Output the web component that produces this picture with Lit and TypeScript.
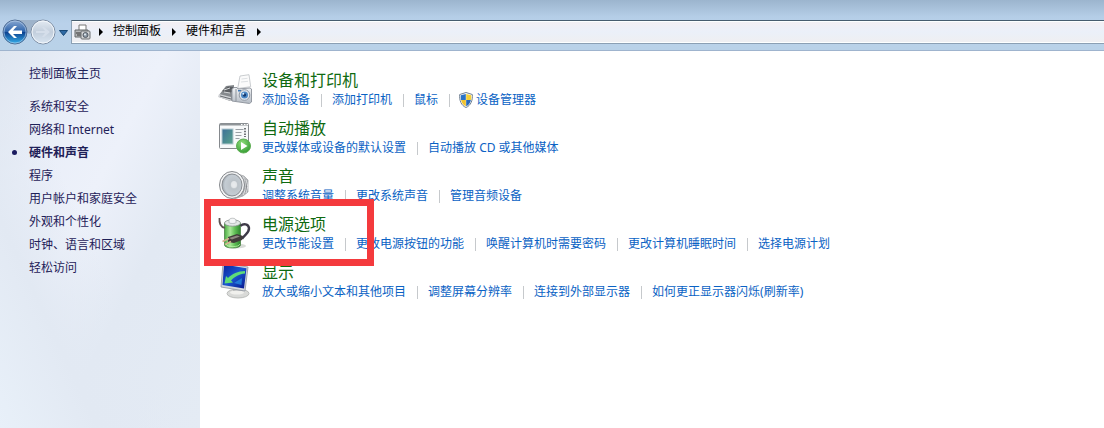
import { LitElement, html, css, svg, nothing } from "lit";
import { customElement, property } from "lit/decorators.js";

interface Task {
  label: string;
  shield?: boolean;
}

interface Category {
  icon: string;
  title: string;
  tasks: Task[];
  marked?: boolean;
}

const categories: Category[] = [
  {
    icon: "devices",
    title: "设备和打印机",
    tasks: [
      { label: "添加设备" },
      { label: "添加打印机" },
      { label: "鼠标" },
      { label: "设备管理器", shield: true },
    ],
  },
  {
    icon: "autoplay",
    title: "自动播放",
    tasks: [{ label: "更改媒体或设备的默认设置" }, { label: "自动播放 CD 或其他媒体" }],
  },
  {
    icon: "sound",
    title: "声音",
    tasks: [{ label: "调整系统音量" }, { label: "更改系统声音" }, { label: "管理音频设备" }],
  },
  {
    icon: "power",
    title: "电源选项",
    marked: true,
    tasks: [
      { label: "更改节能设置" },
      { label: "更改电源按钮的功能" },
      { label: "唤醒计算机时需要密码" },
      { label: "更改计算机睡眠时间" },
      { label: "选择电源计划" },
    ],
  },
  {
    icon: "display",
    title: "显示",
    tasks: [
      { label: "放大或缩小文本和其他项目" },
      { label: "调整屏幕分辨率" },
      { label: "连接到外部显示器" },
      { label: "如何更正显示器闪烁(刷新率)" },
    ],
  },
];

const sections = [
  "系统和安全",
  "网络和 Internet",
  "硬件和声音",
  "程序",
  "用户帐户和家庭安全",
  "外观和个性化",
  "时钟、语言和区域",
  "轻松访问",
];

const icons: Record<string, unknown> = {
  devices: svg`
    <defs>
      <linearGradient id="cam" x1="0" y1="0" x2="0" y2="1">
        <stop offset="0" stop-color="#f1f3f5"/><stop offset="1" stop-color="#b4bbc4"/>
      </linearGradient>
    </defs>
    <path d="M1 21 8 12l8-1v15l-4 1-11-4z" fill="#85898d"/>
    <path d="M4 17 10 12.500l6 .5v4l-5 2z" fill="#5b5e62"/>
    <path d="M6 16l6-2M6 18l6 1" stroke="#d5d7d9" fill="none"/>
    <path d="M1 20l12 3v4L0 23z" fill="#d0d2d5"/>
    <path d="M2 22l11 3" stroke="#666a6f" fill="none"/>
    <path d="M22 2 31 .7l1.700 12-13 1.800z" fill="#fbfbfb" stroke="#bdc0c4" stroke-width=".8"/>
    <path d="M23.500 5l6-.7M23 8l7-.7" stroke="#dde0e3" fill="none"/>
    <path d="M14 15l2-1.500h3l1 1.500 12-1 1.500 1v13l-2 1.500L14 27z" fill="url(#cam)" stroke="#8b919a" stroke-width=".9"/>
    <path d="M18 15v12" stroke="#8d939b" fill="none"/>
    <rect x="20" y="16" width="3" height="1.500" fill="#3e79b8"/>
    <circle cx="26.500" cy="21" r="5.300" fill="#e1e7ee" stroke="#929aa5"/>
    <circle cx="26.500" cy="21" r="3.500" fill="#4a88c6"/>
    <circle cx="26.500" cy="21" r="1.700" fill="#163a70"/>
    <circle cx="25.300" cy="19.700" r="1" fill="#dcf0ff"/>`,
  autoplay: svg`
    <defs>
      <linearGradient id="pic" x1="0" y1="0" x2="1" y2="1">
        <stop offset="0" stop-color="#3d6f98"/><stop offset="1" stop-color="#58a38c"/>
      </linearGradient>
      <radialGradient id="go" cx=".4" cy=".3" r=".8">
        <stop offset="0" stop-color="#8fdc7b"/><stop offset="1" stop-color="#2b962c"/>
      </radialGradient>
    </defs>
    <rect x="1.500" y="1.500" width="29" height="25" rx="1" fill="#f7f9fa" stroke="#85898d"/>
    <path d="M2 2.500h28" stroke="#8f9498" stroke-width="2"/>
    <path d="M23 2.500h1.500M26 2.500h1.500M28.500 2.500H30" stroke="#fff"/>
    <rect x="4" y="7" width="11" height="15" fill="url(#pic)" stroke="#b4c8cf"/>
    <path d="M17.500 7.500h8M17.500 10.500h6M17.500 13.500h6M17.500 16.500h4" stroke="#9ba1a6"/>
    <path d="M27 6v9" stroke="#3a4045" stroke-width="1.400" stroke-dasharray="1.500 1.200"/>
    <circle cx="25.500" cy="24" r="7" fill="url(#go)" stroke="#5fae54"/>
    <path d="M23 20v8l6.500-4z" fill="#fff"/>`,
  sound: svg`
    <defs>
      <radialGradient id="cone" cx=".6" cy=".5" r=".65">
        <stop offset="0" stop-color="#eceef0"/><stop offset=".3" stop-color="#bcc3c9"/>
        <stop offset=".7" stop-color="#c4ccd3"/><stop offset="1" stop-color="#9299a0"/>
      </radialGradient>
      <linearGradient id="magnet" x1="0" y1="0" x2="0" y2="1">
        <stop offset="0" stop-color="#dcdee0"/><stop offset=".5" stop-color="#85888c"/>
        <stop offset="1" stop-color="#c0c2c5"/>
      </linearGradient>
    </defs>
    <path d="M16 3 26 6l4 4v12l-5 4-9 3z" fill="url(#magnet)" stroke="#a6a8ab" stroke-width=".8"/>
    <path d="M25 7c3 6 3 13 0 18M28 10c2 5 2 8 0 13" stroke="#e2e3e5" fill="none"/>
    <ellipse cx="14" cy="15" rx="12.500" ry="13.500" fill="#f0f1f2" stroke="#86898d"/>
    <ellipse cx="14" cy="15" rx="10" ry="11" fill="url(#cone)" stroke="#8b8f94"/>
    <ellipse cx="16" cy="14.500" rx="3" ry="3.500" fill="#e9ebed" opacity=".8"/>`,
  power: svg`
    <defs>
      <linearGradient id="cell" x1="0" y1="0" x2="1" y2="0">
        <stop offset="0" stop-color="#4bab43"/><stop offset=".35" stop-color="#a9e898"/>
        <stop offset=".65" stop-color="#5fbf55"/><stop offset="1" stop-color="#2f8630"/>
      </linearGradient>
    </defs>
    <ellipse cx="18" cy="28" rx="10" ry="2.500" fill="#d9dcd8"/>
    <path d="M6.500 5v22c0 4 16 4 16 0V5z" fill="url(#cell)" stroke="#40783b" stroke-width=".7"/>
    <ellipse cx="14.500" cy="5" rx="8" ry="3.200" fill="#e3e8e6" stroke="#85908a" stroke-width=".8"/>
    <path d="M11 2.500c0-3 7-3 7 0v2c0 1.300-7 1.300-7 0z" fill="#f5f6f7" stroke="#a3a9ab" stroke-width=".7"/>
    <path d="M1.500 0C1 5 3 9 7 10" fill="none" stroke="#5d5452" stroke-width="1.800"/>
    <path d="M22.500 8c3-3 8-2 8.500 2 .4 5-4 6-7 11" fill="none" stroke="#3e3a48" stroke-width="2.400"/>
    <path d="M10 19l9-3 6 2-1 4-8 3-6-1z" fill="#403c3a"/>
    <path d="M11 20l8-2.500 3 1-8 3z" fill="#8e8780"/>
    <path d="M11 20.500 4.500 23.500M13 23.500 7 26.500" stroke="#d5b08e" stroke-width="1.800"/>
    <path d="M8 26c1 3.500 13 3.500 14 0" fill="none" stroke="#baf1a7" stroke-width=".8"/>`,
  display: svg`
    <defs>
      <linearGradient id="screen" x1="0" y1="0" x2="1" y2="1">
        <stop offset="0" stop-color="#0a1f9c"/><stop offset=".5" stop-color="#1a57cf"/>
        <stop offset="1" stop-color="#06128a"/>
      </linearGradient>
    </defs>
    <ellipse cx="20" cy="27.500" rx="11" ry="4.500" fill="#d9dad8" stroke="#b0b2b0" stroke-width=".8"/>
    <path d="M15 21l9 2 1 4-10-1z" fill="#b3b5b5"/>
    <ellipse cx="19" cy="26.500" rx="7" ry="2" fill="#f0f0ed"/>
    <path d="M5-3 30 1 27 25 3 21z" fill="#d6dae0" stroke="#8e949f" stroke-width=".8"/>
    <path d="M6-1.500 28.500 2.300 26 22.500 4.500 19z" fill="url(#screen)"/>
    <path d="M27 5C20 5 14 8 10 12L8 10 6.500 17.500 15 16.500l-2-2c4-4 8-6.500 14-7z" fill="#5fdc78"/>
    <path d="M16 17l8-5-.5 7z" fill="#2ba0f0" opacity=".6"/>`,
};

@customElement("task-icon")
class TaskIcon extends LitElement {
  static styles = css`
    :host { display: block; width: 34px; height: 34px; }
    svg { display: block; width: 34px; height: 34px; overflow: visible; }
  `;
  @property() name = "";
  render() {
    return html`<svg viewBox="0 0 34 34" aria-hidden="true">${icons[this.name]}</svg>`;
  }
}

@customElement("address-bar")
class AddressBar extends LitElement {
  static styles = css`
    :host {
      display: flex;
      align-items: flex-start;
      box-sizing: border-box;
      height: 51px;
      padding-top: 18px;
      padding-left: 2px;
      border-bottom: 1px solid #9fb4ce;
      background: linear-gradient(#9cb5ce 0, #b4cde6 16px, #b9d1ea 24px, #b9d2e8 100%);
    }
    button { padding: 0; border: 0; background: none; display: block; }
    svg { display: block; }
    .recent { padding: 12px 2px 0 1px; margin-right: 1px; }
    .path {
      flex: 1;
      display: flex;
      align-items: center;
      box-sizing: border-box;
      height: 24px;
      margin-top: 2px;
      padding-left: 2px;
      border: 1px solid #8ba0b4;
      border-top-color: #465c6e;
      border-right: 0;
      background: linear-gradient(#f3eff3, #ebf0f9 50%, #efeff1);
      box-shadow: inset 0 1px #fcffff, inset 0 -1px #fcffff;
    }
    .crumb { color: #000; text-decoration: none; font-size: 12px; line-height: 18px; padding-bottom: 2px; }
    .arrow { width: 25px; height: 8px; }
    .first { width: 22px; }
  `;
  arrow(first = false) {
    return first
      ? html`<svg class="first" height="8" viewBox="0 0 22 8" aria-hidden="true">
          <path d="M8 0v8l4-4z" fill="#000" />
        </svg>`
      : html`<svg class="arrow" viewBox="0 0 25 8" aria-hidden="true">
          <path d="M11 0v8l4-4z" fill="#000" />
        </svg>`;
  }
  render() {
    return html`
      <button aria-label="后退">
        <svg width="56" height="28" viewBox="0 0 56 28" aria-hidden="true">
          <defs>
            <linearGradient id="back" x1="0" y1="0" x2="0" y2="1">
              <stop offset="0" stop-color="#8ca9d2" /><stop offset=".48" stop-color="#2e65ac" />
              <stop offset=".5" stop-color="#0c3f8d" /><stop offset="1" stop-color="#36b2ed" />
            </linearGradient>
            <linearGradient id="forward" x1="0" y1="0" x2="0" y2="1">
              <stop offset="0" stop-color="#e4ebf3" /><stop offset=".5" stop-color="#c2cedc" />
              <stop offset="1" stop-color="#dae6f2" />
            </linearGradient>
          </defs>
          <path d="M13 2h28v6l-14 8z" fill="#9eb3ca" />
          <circle cx="13" cy="14" r="12" fill="url(#back)" stroke="#526f96" />
          <circle cx="13" cy="14" r="11" fill="none" stroke="#b9d2ec" stroke-opacity=".6" />
          <path d="M6 14l6-6h3l-4 4.500h9v3.500h-9l4 4h-3z" fill="#fff" />
          <circle cx="41" cy="14" r="12" fill="url(#forward)" stroke="#7f8fa5" />
          <circle cx="41" cy="14" r="11" fill="none" stroke="#f2f7fb" />
          <path d="M48 14l-6-5h-2l3 4h-9v2h9l-3 4h2z" fill="#d5deea" />
        </svg>
      </button>
      <button class="recent" aria-label="最近浏览的位置">
        <svg width="9" height="6" viewBox="0 0 9 6" aria-hidden="true">
          <path d="M.5.5h8L4.500 5.500z" fill="#2e6aa5" stroke="#174775" />
        </svg>
      </button>
      <nav class="path">
        <svg width="17" height="17" viewBox="0 0 17 17" aria-hidden="true">
          <path d="M5 1h7v6H5z" fill="#fff" stroke="#777" />
          <path d="M1 6h13v7H1z" fill="#b4b6b8" stroke="#65686b" />
          <path d="M2 9h5M3 11h4" stroke="#333" />
          <rect x="7" y="7" width="9" height="8" rx="1" fill="#d2d4d6" stroke="#6d7073" />
          <circle cx="11.500" cy="11" r="2.500" fill="#8a97a4" stroke="#565d65" />
          <circle cx="11" cy="10.500" r="1" fill="#e4edf5" />
        </svg>
        ${this.arrow(true)}<a class="crumb" href="#">控制面板</a>
        ${this.arrow()}<a class="crumb" href="#">硬件和声音</a>${this.arrow()}
      </nav>
    `;
  }
}

@customElement("side-nav")
class SideNav extends LitElement {
  static styles = css`
    :host {
      display: block;
      flex: none;
      box-sizing: border-box;
      width: 200px;
      padding: 11px 0 0 12px;
      background:
        linear-gradient(65deg, #e8f0f9 0, #e2e9f3 26%, transparent 48%),
        linear-gradient(118deg, #dfe6f0 0, #e9eef8 22%, #edf1fa 42%, #e2e9f3 64%, #e4ebf4 100%);
    }
    a {
      display: flex;
      align-items: center;
      font-size: 12px;
      line-height: 23px;
      color: #1f2158;
      text-decoration: none;
    }
    .home { margin-bottom: 10px; }
    .dot { width: 5px; height: 5px; margin-right: 12px; border-radius: 50%; }
    .current { font-weight: bold; }
    .current .dot { background: #1b1c60; }
  `;
  render() {
    return html`<nav>
      <a class="home" href="#"><span class="dot"></span>控制面板主页</a>
      ${sections.map(
        (label) => html`<a href="#" class=${label === "硬件和声音" ? "current" : ""}
          ><span class="dot"></span>${label}</a
        >`
      )}
    </nav>`;
  }
}

@customElement("category-row")
class CategoryRow extends LitElement {
  static styles = css`
    :host { display: flex; position: relative; height: 48px; }
    task-icon { flex: none; margin: 4px 10px 0 0; }
    h2 { margin: 0 0 1px; font-size: 16px; line-height: 20px; font-weight: normal; }
    h2 a { color: #0f6a10; }
    a { text-decoration: none; white-space: nowrap; color: #0a62c4; }
    ul {
      display: flex;
      flex-wrap: wrap;
      margin: 0;
      padding: 0;
      list-style: none;
      font-size: 12px;
      line-height: 18px;
    }
    li { display: flex; align-items: center; }
    li + li::before {
      content: "";
      width: 1px;
      height: 13px;
      margin: 0 10px 0 11px;
      background: #c6c9cc;
    }
    li a { display: flex; align-items: center; }
    .shield { width: 14px; height: 16px; margin: 0 3px 0 -1px; }
    .mark {
      position: absolute;
      z-index: 1;
      left: -14px;
      top: -15px;
      box-sizing: border-box;
      width: 170px;
      height: 67px;
      border: 7px solid #f43a3d;
      pointer-events: none;
    }
  `;
  @property({ attribute: false }) category!: Category;
  shield() {
    return html`<svg class="shield" viewBox="0 0 14 16" aria-hidden="true">
      <path d="M7 .5 13.300 2.500c.5 6-1.500 11-6.300 13C2.200 13.500.2 8.500.7 2.500z" fill="#fff" stroke="#6f7f91" />
      <path d="M6.800 2v6H2C1.700 6 1.700 5 1.800 3.300z" fill="#2b72c6" />
      <path d="M7.200 2v6H12c.3-2 .3-3 .2-4.700z" fill="#f5d038" />
      <path d="M6.800 8v6.200C4.300 13 2.500 11 2.100 8z" fill="#f0c22d" />
      <path d="M7.200 8v6.200c2.500-1.200 4.300-3.200 4.700-6.200z" fill="#2668ba" />
    </svg>`;
  }
  render() {
    const c = this.category;
    return html`
      <task-icon name=${c.icon}></task-icon>
      <div>
        <h2><a href="#">${c.title}</a></h2>
        <ul>
          ${c.tasks.map(
            (t) => html`<li><a href="#">${t.shield ? this.shield() : nothing}${t.label}</a></li>`
          )}
        </ul>
      </div>
      ${c.marked ? html`<div class="mark"></div>` : nothing}
    `;
  }
}

@customElement("app-root")
class AppRoot extends LitElement {
  static styles = css`
    :host {
      display: flex;
      flex-direction: column;
      min-height: 100vh;
      background: #fff;
      font-family: "Noto Sans", "Noto Sans CJK SC", sans-serif;
    }
    .body { flex: 1; display: flex; }
    main { flex: 1; padding: 19px 18px; }
  `;
  render() {
    return html`
      <address-bar></address-bar>
      <div class="body">
        <side-nav></side-nav>
        <main>
          ${categories.map((c) => html`<category-row .category=${c}></category-row>`)}
        </main>
      </div>
    `;
  }
}
